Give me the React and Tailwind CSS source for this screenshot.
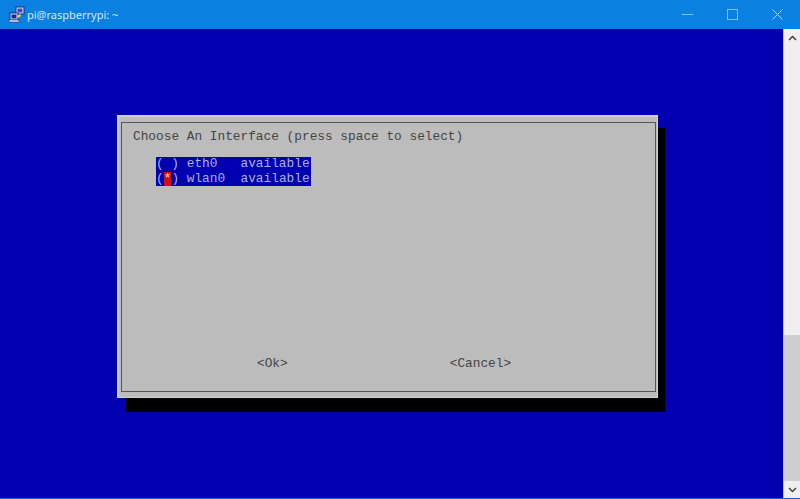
const mono = { fontFamily: '"Liberation Mono", monospace' };

function PuttyIcon() {
  return (
    <svg width="17" height="18" viewBox="0 0 17 18" className="shrink-0">
      <rect x="8" y="1" width="8" height="7" fill="#d8e4f4" stroke="#1c2b78" />
      <rect x="9.5" y="2.5" width="5" height="4" fill="#3a4fc0" />
      <rect x="2" y="7" width="8" height="7" fill="#d8e4f4" stroke="#1c2b78" />
      <rect x="3.5" y="8.5" width="5" height="4" fill="#1a2a90" />
      <rect x="1" y="14" width="10" height="2" fill="#e8e8f0" stroke="#1c2b78" strokeWidth="0.5" />
      <path d="M9 10l3-2 1 2-3 2z" fill="#f0dc40" />
    </svg>
  );
}

export default function App() {
  return (
    <div className="flex flex-col w-[800px] h-[499px] overflow-hidden bg-[#0000b0] border-b border-[#1a62c8]">
      <div className="flex items-center h-[29px] shrink-0 bg-[#0a80e0] text-[#cfe8fb] pl-2">
        <PuttyIcon />
        <span className="ml-[2px] text-[11px] leading-none" style={{ fontFamily: '"Noto Sans", sans-serif' }}>pi@raspberrypi: ~</span>
        <div className="ml-auto flex items-center h-full">
          <div className="w-[45px] flex justify-center"><div className="w-[11px] h-px bg-[#7cc4f6]" /></div>
          <div className="w-[45px] flex justify-center"><div className="w-[11px] h-[11px] border border-[#7cc4f6]" /></div>
          <div className="w-[45px] flex justify-center">
            <svg width="11" height="11" viewBox="0 0 11 11" stroke="#a8daf9" fill="none"><path d="M.5.5l10 10M10.5.5l-10 10" /></svg>
          </div>
        </div>
      </div>
      <div className="flex flex-1 min-h-0">
        <div className="flex-1 pl-[117px] pt-[86px]">
          <div className="relative w-[541px] h-[283px]">
            <div className="absolute left-[9px] top-[13px] -right-[7px] -bottom-[14px] bg-black" />
            <div className="relative h-full bg-[#bcbcbc] border-t-[2px] border-l-[2px] border-r-[1px] border-b-[1px] border-t-[#d0d0d0] border-l-[#d0d0d0] border-r-[#d0d0d0] border-b-[#d0d0d0] pt-[5px] pl-[2px] pr-[1px] pb-[5px]">
              <div className="flex flex-col h-full border border-[#555555] text-[#444444] text-[12.8px] leading-[14.5px]" style={mono}>
                <div className="pl-[11px] pt-[7px] whitespace-pre">Choose An Interface (press space to select)</div>
                <div className="ml-[34px] mt-[12.5px] w-[155px] bg-[#0000b0] text-[#b0b0e8] whitespace-pre">
                  <div>{"( ) eth0   available"}</div>
                  <div className="flex">
                    <span>(</span>
                    <span className="bg-[#cc1010] text-[#f4e4e4]">*</span>
                    <span>{") wlan0  available"}</span>
                  </div>
                </div>
                <div className="mt-auto mb-[20px] flex whitespace-pre">
                  <span className="ml-[135px]">{"<Ok>"}</span>
                  <span className="ml-[162px]">{"<Cancel>"}</span>
                </div>
              </div>
            </div>
          </div>
        </div>
        <div className="flex flex-col w-[17px] shrink-0 bg-[#f0eeee] border-l border-[#a8c8ee]">
          <div className="flex items-center justify-center h-[17px] shrink-0">
            <svg width="9" height="6" viewBox="0 0 9 6" fill="none" stroke="#404040" strokeWidth="1.5"><path d="M1 5l3.5-3.5L8 5" /></svg>
          </div>
          <div className="flex-1" />
          <div className="h-[146px] bg-[#cfcfcf]" />
          <div className="flex items-center justify-center h-[17px] shrink-0">
            <svg width="9" height="6" viewBox="0 0 9 6" fill="none" stroke="#404040" strokeWidth="1.5"><path d="M1 1l3.5 3.5L8 1" /></svg>
          </div>
        </div>
      </div>
    </div>
  );
}
